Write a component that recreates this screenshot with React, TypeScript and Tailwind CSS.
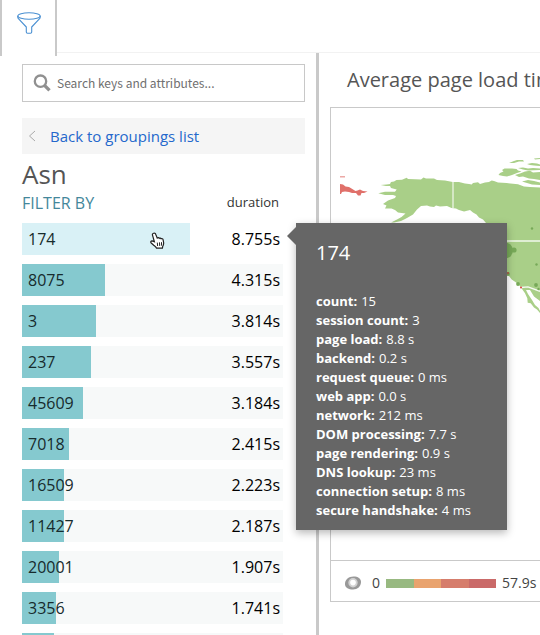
import React from "react";

type Group = { asn: string; duration: string; width: number };

const groups: Group[] = [
  { asn: "174", duration: "8.755s", width: 168 },
  { asn: "8075", duration: "4.315s", width: 83 },
  { asn: "3", duration: "3.814s", width: 74 },
  { asn: "237", duration: "3.557s", width: 69 },
  { asn: "45609", duration: "3.184s", width: 61 },
  { asn: "7018", duration: "2.415s", width: 47 },
  { asn: "16509", duration: "2.223s", width: 42 },
  { asn: "11427", duration: "2.187s", width: 42 },
  { asn: "20001", duration: "1.907s", width: 37 },
  { asn: "3356", duration: "1.741s", width: 34 },
  { asn: "", duration: "", width: 32 },
];

const details: [string, string][] = [
  ["count", "15"],
  ["session count", "3"],
  ["page load", "8.8 s"],
  ["backend", "0.2 s"],
  ["request queue", "0 ms"],
  ["web app", "0.0 s"],
  ["network", "212 ms"],
  ["DOM processing", "7.7 s"],
  ["page rendering", "0.9 s"],
  ["DNS lookup", "23 ms"],
  ["connection setup", "8 ms"],
  ["secure handshake", "4 ms"],
];

function FunnelIcon() {
  return (
    <svg width="24" height="22" viewBox="0 0 24 22" fill="none" stroke="#4a90d2" strokeWidth="1.1" strokeLinejoin="round">
      <ellipse cx="12" cy="4" rx="11.2" ry="3.2" />
      <path d="M.8 4v1.200c0 .6.2 1 .6 1.400L9.300 15v5c0 .8.500 1.200 1.200 1.200h3c.7 0 1.200-.4 1.200-1.200v-5l7.900-8.400c.4-.4.6-.8.6-1.400V4" />
    </svg>
  );
}

function SearchIcon() {
  return (
    <svg className="shrink-0" width="18" height="18" viewBox="0 0 18 18" fill="none" stroke="#909090">
      <circle cx="7.5" cy="7.2" r="5.700" strokeWidth="2.300" />
      <path d="M11.500 11.400l5 5" strokeWidth="3.300" />
    </svg>
  );
}

function HandCursor() {
  return (
    <svg className="absolute top-[9px] left-[128px]" width="16" height="18" viewBox="0 0 16 18">
      <path
        d="M3.500 1.200c1-.4 1.900.2 2.300 1.300L7.200 6c.6-.6 1.600-.4 2 .3.600-.5 1.500-.3 1.900.5.8-.4 1.900 0 2 1l.5 2.700c.2 1.600-.1 2.700-.9 4l-.3 1.700H6.600c-.4-1.200-1.700-2-2.900-3L1.200 11c-.9-.9-.3-2.200 1-2.100l2.200.9L2.500 3.200c-.3-.9.1-1.700 1-2z"
        fill="#fff"
        stroke="#222"
        strokeWidth="1.200"
      />
      <path d="M7.300 10.600l.3 3.400M9.500 10.400l.2 3.500M11.500 10.200l.1 3.500" stroke="#222" strokeWidth="1" />
    </svg>
  );
}

function EyeIcon() {
  return (
    <svg width="18" height="14" viewBox="0 0 18 14">
      <path d="M1 8.500C.6 4 4.500.5 9.500.5c4.500 0 7.500 2 7.500 5.500 0 4.500-3.500 7.500-8 7.500-4.500 0-7.600-1.800-8-5z" fill="#999" />
      <circle cx="9" cy="6.800" r="4.700" fill="#d2d2d2" />
      <circle cx="9" cy="6.600" r="2.800" fill="#fff" />
    </svg>
  );
}

function WorldMap() {
  return (
    <svg className="block" width="209" height="452" viewBox="331 108 209 452" role="img" aria-label="Page load time map">
      <g fill="#e0706a">
        <polygon points="340,184 343,184.500 345.500,186.500 349,187 351.500,188.500 355.500,191 357.500,190.500 360,189.500 363,191 367.500,191.500 364,193 361.500,193 360.500,195.500 358,195.500 356,193 352,193 349,192 345,191.500 342,192 341,194 340,194" />
        <rect x="340" y="176" width="5" height="1.500" opacity=".6" />
      </g>
      <g fill="#a9cf88">
        <polygon points="380.700,185 386.500,184.500 390,184 391,182 394,181.500 396.500,180 402,179.800 406.700,177.700 408,179 415,179.300 421,179.500 423.500,177.500 426,178.500 434,178.500 437,180 445,180.500 452.700,182 459,182 465,183.500 469,184 471.700,184.500 473,183 478,182.300 480,184 485,182.500 489,182 491.700,180.500 494,181 498,182.500 506.700,183 518,184.300 524,186.500 530,187 540,187.500 540,301 534,296.500 530,290 526,290 528,294 532,300 535,305 538.500,308 540,311 540,313 537,309.500 534,307.500 530.700,303.300 527.700,302.700 527.300,298.300 525,293.300 521,287.500 518.300,284 511.700,279.500 507,273.500 497,255 497,230 486,223 483,219.500 479,217.500 476.500,214.500 473,212.500 470,210 464,211.500 459,210 456,208.500 451.500,208 447,206 440,206.500 436,205.500 434,207 430,206.500 427,205.500 421,206 417,209.500 413,214.500 407,218 401,221 394,222.500 391,222.500 397,219.500 401.500,217 405.500,213.500 398,212.500 395,210 391.500,208.500 385,208.500 386.500,205.500 383,204 388,200.500 395,198 396,196 393,195 385,195 378.300,193.300 385,191.700 395,191.700 396.700,189.500 391,188 390,186 386,186" />
        <polygon points="498.500,175 500,173 503.500,171.500 502,170 504.500,168.500 512,168.500 516.500,169 518,170.500 521.500,171.500 517,173 512,175 507,176.500 503,176" />
        <polygon points="515,175 520,173.500 525,171.500 530,170.700 533,172.500 540,172 540,180 534,179 529,178.500 523,176.500 519,177" />
        <polygon points="509,163 514,161 517,160 523,160 524,161.500 519,161.500 514,163" />
        <polygon points="527,164 532,163 537,163.500 540,164.500 540,166 534,165.500 530,165" />
        <polygon points="534,158.500 540,158 540,159 535,159.500" />
        <polygon points="518,168 523,167.500 528,168.500 533,168 540,168.500 540,170 528,170.500 523,169.500" />
        <polygon points="522,181.500 528,180 534,181 540,182.500 540,185 532,184.500" />
      </g>
      <path d="M453 182v26" stroke="#fff" strokeWidth="1" />
      <path d="M503 241h37" stroke="#dfeed3" strokeWidth="2" />
      <path d="M521 287.500l7-.7 12 4.500" stroke="#f7fbf3" strokeWidth="1.300" fill="none" />
      <g fill="#77a958">
        <circle cx="505" cy="250.500" r="8" />
        <circle cx="514" cy="250" r="2.600" />
        <circle cx="532" cy="228.500" r="1.200" />
        <circle cx="536.500" cy="264.500" r="1.200" />
        <circle cx="536" cy="285" r="1.900" />
        <circle cx="538.500" cy="289" r="1.200" />
        <circle cx="518" cy="284" r="1.900" />
        <circle cx="508" cy="274" r="1.900" />
      </g>
      <circle cx="508" cy="273" r="1" fill="#b95047" />
      <circle cx="521" cy="287.500" r="1" fill="#d9433f" />
    </svg>
  );
}

function Tooltip() {
  return (
    <div
      role="tooltip"
      className="absolute top-0 left-full z-10 ml-[13px] w-[211px] bg-[#666] px-5 pt-4 pb-2.5 text-white shadow-[0_3px_8px_rgba(0,0,0,0.28)]"
    >
      <span className="absolute top-1 right-full border-y-[9px] border-r-[9px] border-y-transparent border-r-[#666]" />
      <h2 className="text-xl leading-7">174</h2>
      <dl className="mt-[25px] text-[13px] leading-[19px]">
        {details.map(([key, value]) => (
          <div key={key} className="flex gap-1">
            <dt className="font-bold">{key}:</dt>
            <dd>{value}</dd>
          </div>
        ))}
      </dl>
    </div>
  );
}

export default function App() {
  return (
    <div className="flex h-screen flex-col overflow-hidden bg-white font-['Open_Sans',sans-serif] text-[#222]">
      <header className="h-[53px] shrink-0 border-b border-[#f2f2f2]">
        <button aria-label="Filter" className="flex h-14 w-[57px] items-start justify-center border-x-2 border-[#c9c9c9] bg-white pt-3">
          <FunnelIcon />
        </button>
      </header>
      <div className="flex min-h-0 flex-1">
        <aside className="w-[319px] shrink-0 border-r-3 border-[#c9c9c9] pt-[11px] pr-[11px] pl-[22px]">
          <label className="flex h-[38px] items-center gap-1.5 border border-[#c8c8c8] px-2.5">
            <SearchIcon />
            <input
              type="text"
              aria-label="Search keys and attributes"
              placeholder="Search keys and attributes..."
              className="min-w-0 flex-1 font-['Noto_Sans_CJK_SC',sans-serif] text-xs outline-none placeholder:text-[#6f6f6f]"
            />
          </label>
          <a href="#groupings" className="mt-4 flex h-9 items-center gap-3 bg-[#f5f5f5] pl-1.5 text-[15px] text-[#2468cc]">
            <svg width="10" height="12" viewBox="0 0 10 12" fill="none" stroke="#aaa">
              <path d="M7 1L1.500 6 7 11" />
            </svg>
            Back to groupings list
          </a>
          <h1 className="mt-1 text-[26px] leading-8 text-[#555]">Asn</h1>
          <div className="flex h-[25px] w-[261px] items-center justify-between pr-1">
            <span className="text-base text-[#44879b]">FILTER BY</span>
            <span className="text-[13px] text-[#333]">duration</span>
          </div>
          <ul className="mt-2 flex w-[261px] flex-col gap-[9px]">
            {groups.map((group, index) => (
              <li key={index} className={index === 0 ? "relative" : ""}>
                <button className={"grid h-8 w-full items-center text-left " + (index === 0 ? "" : "bg-[#f7f9f9]")}>
                  <span
                    className={"col-start-1 row-start-1 h-8 " + (index === 0 ? "bg-[#d9f1f6]" : "bg-[#85c9cf]")}
                    style={{ width: group.width }}
                  />
                  <span className="col-start-1 row-start-1 flex justify-between pr-[3px] pl-1.5 text-base">
                    <span className="text-[#172b2d]">{group.asn}</span>
                    <span className="text-black">{group.duration}</span>
                  </span>
                </button>
                {index === 0 && <HandCursor />}
                {index === 0 && <Tooltip />}
              </li>
            ))}
          </ul>
        </aside>
        <main className="min-w-0 flex-1 overflow-hidden pl-[11px]">
          <h2 className="pt-3 pl-[17px] text-xl leading-[30px] whitespace-nowrap text-[#555]">Average page load time</h2>
          <section className="mt-3 border-y border-l border-[#c9c9c9]">
            <WorldMap />
            <footer className="flex h-[41px] items-center border-t border-[#c9c9c9] pt-1 pl-[13px] text-sm text-[#444]">
              <EyeIcon />
              <span className="ml-2.5">0</span>
              <span className="ml-1.5 flex h-[9px] w-[110px] shrink-0">
                <span className="flex-1 bg-[#98b981]" />
                <span className="flex-1 bg-[#e9a36e]" />
                <span className="flex-1 bg-[#d67d6c]" />
                <span className="flex-1 bg-[#ca6a69]" />
              </span>
              <span className="ml-1.5">57.9s</span>
            </footer>
          </section>
        </main>
      </div>
    </div>
  );
}
